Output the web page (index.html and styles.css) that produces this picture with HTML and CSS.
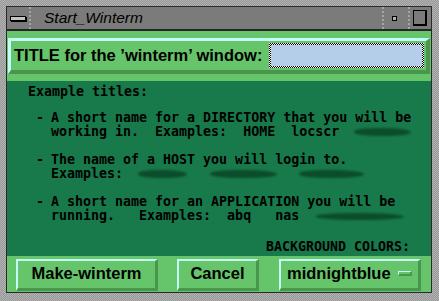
FILE: index.html
```
<!DOCTYPE html>
<html lang="en">
<head>
    <meta charset="UTF-8">
    <meta name="viewport" content="width=device-width, initial-scale=1.0">
    <title>Start_Winterm</title>
    <link rel="stylesheet" href="styles.css">
</head>
<body>
    <div class="window">
        <div class="frame">
            <div class="titlebar">
                <div class="tb-btn menu-btn"><span class="menu-bar"></span></div>
                <div class="tb-title">Start_Winterm</div>
                <div class="tb-btn min-btn"><span class="min-dot"></span></div>
                <div class="tb-btn max-btn"><span class="max-box"></span></div>
            </div>

            <div class="content">
                <div class="title-panel">
                    <label class="title-label">TITLE for the ’winterm’ window:</label>
                    <div class="field"><div class="field-input"></div></div>
                </div>

                <div class="help">
                    <div class="help-line">Example titles:</div>
                    <div class="help-item first">
                        <span class="dash">-</span>
                        <div>A short name for a DIRECTORY that you will be<br>working in.  Examples:  HOME  locscr<span class="smudge s1"></span></div>
                    </div>
                    <div class="help-item">
                        <span class="dash">-</span>
                        <div>The name of a HOST you will login to.<br>Examples:<span class="smudge s2"></span><span class="smudge s3"></span><span class="smudge s4"></span></div>
                    </div>
                    <div class="help-item">
                        <span class="dash">-</span>
                        <div>A short name for an APPLICATION you will be<br>running.   Examples:  abq   nas<span class="smudge s5"></span></div>
                    </div>
                    <div class="help-colors">BACKGROUND COLORS:</div>
                </div>

                <div class="button-bar">
                    <button class="btn btn-make">Make-winterm</button>
                    <button class="btn btn-cancel">Cancel</button>
                    <button class="btn btn-option">midnightblue<span class="option-mark"></span></button>
                </div>
            </div>
        </div>
    </div>
</body>
</html>
```

FILE: styles.css
```
html, body {
    margin: 0;
    padding: 0;
}

body {
    width: 439px;
    height: 301px;
    overflow: hidden;
    font-family: "Liberation Sans", Arial, sans-serif;
}

.window {
    width: 439px;
    height: 301px;
    box-sizing: border-box;
    padding: 6px 7px 8px 6px;
    background-color: #a4a4a4;
    background-image: repeating-conic-gradient(#989898 0 25%, #b2b2b2 0 50%);
    background-size: 2px 2px;
}

.frame {
    height: 100%;
    box-sizing: border-box;
    border: 1px solid #2a2a2a;
    display: flex;
    flex-direction: column;
}

/* title bar */
.titlebar {
    height: 22px;
    flex: none;
    display: flex;
    background-color: #7b7b7b;
    border-bottom: 2px solid #262626;
}

.tb-btn {
    display: flex;
    align-items: center;
    justify-content: center;
    box-sizing: border-box;
}

.menu-btn {
    width: 24px;
    border-right: 2px dotted #a6a6a6;
}

.menu-bar {
    width: 14px;
    height: 3px;
    background-color: #c4c4c4;
    border: 1px solid #000;
    box-shadow: 1px 1px 0 #000;
}

.tb-title {
    flex: 1;
    padding-left: 13px;
    font-style: italic;
    font-size: 15.5px;
    line-height: 22px;
    color: #000;
}

.min-btn {
    width: 26px;
    border-left: 2px dotted #a6a6a6;
}

.min-dot {
    width: 3px;
    height: 3px;
    background-color: #b0b0b0;
    border: 1px solid #000;
    margin-left: -3px;
}

.max-btn {
    width: 23px;
    border-left: 2px dotted #a6a6a6;
}

.max-box {
    width: 11px;
    height: 13px;
    border: 1px solid #000;
    border-right-width: 2px;
    border-bottom-width: 2px;
    margin-left: -2px;
}

/* dialog body */
.content {
    flex: 1;
    display: flex;
    flex-direction: column;
    background-color: #66c46a;
}

.title-panel {
    height: 36px;
    box-sizing: border-box;
    margin: 7px 1px 0 1px;
    border-style: solid;
    border-width: 3px 4px 4px 3px;
    border-color: #c2fff6 #4b964e #4b964e #c2fff6;
    display: flex;
    align-items: center;
    justify-content: space-between;
    padding: 0 2px 0 3px;
}

.title-label {
    font-weight: bold;
    font-size: 16.5px;
    color: #000;
}

.field {
    width: 155px;
    height: 25px;
    box-sizing: border-box;
    padding: 2px;
    background-image: repeating-conic-gradient(#000 0 25%, #fff 0 50%);
    background-size: 2px 2px;
}

.field-input {
    height: 100%;
    background-color: #b4cde9;
}

.help {
    height: 175px;
    box-sizing: border-box;
    margin-top: 7px;
    padding: 4px 21px 2px 21px;
    background-color: #187a4a;
    display: flex;
    flex-direction: column;
    font-family: "DejaVu Sans Mono", monospace;
    font-weight: bold;
    font-size: 13.3px;
    line-height: 14px;
    color: #000;
    white-space: pre;
}

.help-item {
    display: flex;
    margin-top: 14px;
    margin-left: 8px;
}

.help-item.first {
    margin-top: 12px;
}

.dash {
    width: 15px;
    flex: none;
}

/* blurred-out example names */
.smudge {
    display: inline-block;
    height: 8px;
    vertical-align: 0;
    border-radius: 45% 55% 50% 50%;
    background-color: #0b4d2a;
    filter: blur(1.2px);
}

.s1 { width: 57px; margin-left: 15px; }
.s2 { width: 49px; margin-left: 15px; }
.s3 { width: 67px; margin-left: 23px; }
.s4 { width: 65px; margin-left: 22px; }
.s5 { width: 88px; margin-left: 17px; height: 7px; }

.help-colors {
    margin-top: auto;
    text-align: right;
}

/* bottom buttons */
.button-bar {
    height: 36px;
    box-sizing: border-box;
    padding: 3px 0 1px 9px;
    display: flex;
    align-items: stretch;
}

.btn {
    box-sizing: border-box;
    margin: 0;
    padding: 0 0 2px 0;
    background-color: #66c46a;
    border-style: solid;
    border-width: 2px 3px 3px 2px;
    border-color: #c2fff6 #4b964e #4b964e #c2fff6;
    font-family: "Liberation Sans", Arial, sans-serif;
    font-weight: bold;
    font-size: 16.5px;
    color: #000;
}

.btn-make {
    width: 142px;
}

.btn-cancel {
    width: 82px;
    margin-left: 19px;
}

.btn-option {
    width: 142px;
    margin-left: 20px;
    display: flex;
    align-items: center;
    justify-content: space-between;
    padding-left: 6px;
    padding-right: 6px;
}

.option-mark {
    width: 14px;
    height: 5px;
    box-sizing: border-box;
    border-style: solid;
    border-width: 1px 2px 2px 1px;
    border-color: #c2fff6 #4b964e #4b964e #c2fff6;
}
```
